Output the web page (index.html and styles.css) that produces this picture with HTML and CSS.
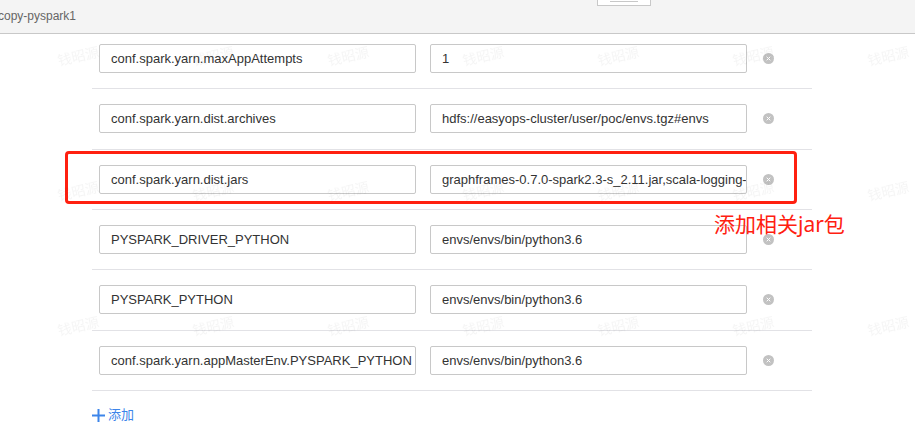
FILE: index.html
```html
<!DOCTYPE html>
<html lang="zh-CN">
<head>
<meta charset="utf-8">
<title>copy-pyspark1</title>
<link rel="stylesheet" href="styles.css">
</head>
<body>
<header class="topbar">
  <span class="topbar-title">copy-pyspark1</span>
  <span class="handle"></span>
</header>
<main class="content">
  <ul class="rows">
    <li class="row">
      <input class="field" type="text" aria-label="Key 1" value="conf.spark.yarn.maxAppAttempts">
      <input class="field" type="text" aria-label="Value 1" value="1">
      <button class="remove" type="button" aria-label="删除"><svg viewBox="0 0 11 11"><circle cx="5.5" cy="5.5" r="5.5"/><path d="M3.7 3.7l3.6 3.6M7.3 3.7L3.7 7.3"/></svg></button>
    </li>
    <li class="row">
      <input class="field" type="text" aria-label="Key 2" value="conf.spark.yarn.dist.archives">
      <input class="field" type="text" aria-label="Value 2" value="hdfs://easyops-cluster/user/poc/envs.tgz#envs">
      <button class="remove" type="button" aria-label="删除"><svg viewBox="0 0 11 11"><circle cx="5.5" cy="5.5" r="5.5"/><path d="M3.7 3.7l3.6 3.6M7.3 3.7L3.7 7.3"/></svg></button>
    </li>
    <li class="row">
      <input class="field" type="text" aria-label="Key 3" value="conf.spark.yarn.dist.jars">
      <input class="field" type="text" aria-label="Value 3" value="graphframes-0.7.0-spark2.3-s_2.11.jar,scala-logging-">
      <button class="remove" type="button" aria-label="删除"><svg viewBox="0 0 11 11"><circle cx="5.5" cy="5.5" r="5.5"/><path d="M3.7 3.7l3.6 3.6M7.3 3.7L3.7 7.3"/></svg></button>
      <span class="highlight"></span>
      <span class="note">添加相关jar包</span>
    </li>
    <li class="row">
      <input class="field" type="text" aria-label="Key 4" value="PYSPARK_DRIVER_PYTHON">
      <input class="field" type="text" aria-label="Value 4" value="envs/envs/bin/python3.6">
      <button class="remove" type="button" aria-label="删除"><svg viewBox="0 0 11 11"><circle cx="5.5" cy="5.5" r="5.5"/><path d="M3.7 3.7l3.6 3.6M7.3 3.7L3.7 7.3"/></svg></button>
    </li>
    <li class="row">
      <input class="field" type="text" aria-label="Key 5" value="PYSPARK_PYTHON">
      <input class="field" type="text" aria-label="Value 5" value="envs/envs/bin/python3.6">
      <button class="remove" type="button" aria-label="删除"><svg viewBox="0 0 11 11"><circle cx="5.5" cy="5.5" r="5.5"/><path d="M3.7 3.7l3.6 3.6M7.3 3.7L3.7 7.3"/></svg></button>
    </li>
    <li class="row">
      <input class="field" type="text" aria-label="Key 6" value="conf.spark.yarn.appMasterEnv.PYSPARK_PYTHON">
      <input class="field" type="text" aria-label="Value 6" value="envs/envs/bin/python3.6">
      <button class="remove" type="button" aria-label="删除"><svg viewBox="0 0 11 11"><circle cx="5.5" cy="5.5" r="5.5"/><path d="M3.7 3.7l3.6 3.6M7.3 3.7L3.7 7.3"/></svg></button>
    </li>
  </ul>
  <a class="add" href="#"><svg viewBox="0 0 13 13"><path d="M6.5 0v13M0 6.5h13"/></svg>添加</a>
</main>
<svg class="watermark" aria-hidden="true">
  <defs>
    <pattern id="mark" x="50" y="0" width="135" height="135" patternUnits="userSpaceOnUse">
      <text x="9" y="66" transform="rotate(-13 9 66)">钱昭源</text>
    </pattern>
  </defs>
  <rect y="34" width="100%" height="100%" fill="url(#mark)"/>
</svg>
</body>
</html>
```
FILE: styles.css
```css
* {
  box-sizing: border-box;
}

body {
  margin: 0;
  background: #fff;
  color: #333;
  font: 13px/18px "Liberation Sans", "Noto Sans CJK SC", sans-serif;
  overflow: hidden;
}

.topbar {
  position: relative;
  z-index: 1;
  display: flex;
  align-items: center;
  height: 34px;
  padding-bottom: 1px;
  background: #f4f4f4;
  border-bottom: 1px solid #c8c8c8;
  color: #666;
  font-size: 12px;
}

.topbar-title {
  margin-left: -2px;
}

.handle {
  position: absolute;
  top: 0;
  left: 597px;
  width: 54px;
  height: 6px;
  background: #fff;
  border: 1px solid #c8c8c8;
  border-top: 0;
}

.handle::before {
  content: "";
  display: block;
  height: 1px;
  margin: 1px 12px 0;
  background: #c8c8c8;
}

.content {
  margin: -5px 103px 0 92px;
}

.rows {
  display: grid;
  grid-template-rows: repeat(6, 1fr);
  height: 362px;
  margin: 0;
  padding: 0;
  list-style: none;
}

.row {
  position: relative;
  display: grid;
  grid-template-columns: 1fr 1fr 14px;
  gap: 14px;
  align-items: center;
  padding: 0 37px 0 7px;
  border-bottom: 1px solid #e2e2e6;
}

.field {
  width: 100%;
  min-width: 0;
  height: 29px;
  padding: 0 0 0 11px;
  border: 1px solid #c8c8c8;
  border-radius: 2px;
  background: #fff;
  color: #333;
  font: inherit;
}

.remove {
  display: flex;
  justify-content: center;
  padding: 0;
  border: 0;
  background: none;
}

.remove svg {
  width: 11px;
  height: 11px;
  fill: #c2c2c2;
  stroke: #fff;
}

.remove circle {
  stroke: none;
}

.highlight {
  position: absolute;
  inset: 1px 15px 5px -27px;
  border: 3px solid #ff2010;
  border-radius: 4px;
  pointer-events: none;
}

.note {
  position: absolute;
  z-index: 1;
  top: 60px;
  left: 622px;
  color: #ff2010;
  font: 21px/28px "Noto Sans", "Noto Sans CJK SC", sans-serif;
  white-space: nowrap;
}

.add {
  display: inline-flex;
  align-items: center;
  gap: 3px;
  margin-top: 15px;
  color: #3d85ea;
  text-decoration: none;
}

.add svg {
  width: 13px;
  height: 13px;
  fill: none;
  stroke: currentColor;
  stroke-width: 2;
}

.watermark {
  position: absolute;
  inset: 0;
  width: 100%;
  height: 100%;
  pointer-events: none;
}

.watermark text {
  fill: #000;
  fill-opacity: 0.04;
  font: 14px "Noto Sans CJK SC", sans-serif;
}
```
